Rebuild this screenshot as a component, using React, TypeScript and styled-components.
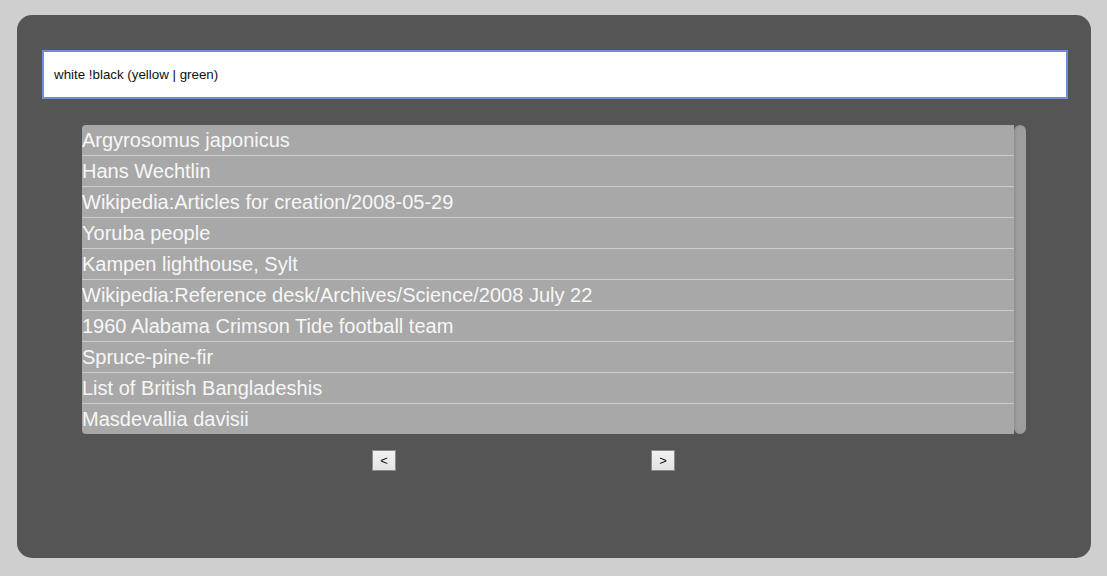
import React, { useState } from "react";
import styled, { createGlobalStyle } from "styled-components";

const GlobalStyle = createGlobalStyle`
  html, body {
    margin: 0;
    padding: 0;
    background: #cfcfcf;
    font-family: "Liberation Sans", Arial, sans-serif;
  }
`;

const Page = styled.div`
  padding: 15px 16px 18px 17px;
  box-sizing: border-box;
  width: 1107px;
  height: 576px;
`;

const Panel = styled.div`
  background: #555555;
  border-radius: 15px;
  height: 543px;
  box-sizing: border-box;
  padding: 35px 23px 0 25px;
  display: flex;
  flex-direction: column;
`;

const SearchInput = styled.input`
  box-sizing: border-box;
  width: 1026px;
  height: 49px;
  border: 2px solid #6b8fd4;
  background: #ffffff;
  padding: 0 10px;
  font-family: "Liberation Sans", Arial, sans-serif;
  font-size: 13.33px;
  color: #111;
  outline: none;
`;

const ListWrap = styled.div`
  margin: 26px 0 0 40px;
  width: 944px;
  height: 309px;
  border-radius: 4px;
  display: flex;
  overflow: hidden;
`;

const Rows = styled.ul`
  list-style: none;
  margin: 0;
  padding: 0;
  flex: 1;
  background: #a8a8a8;
`;

const Row = styled.li<{ $last?: boolean }>`
  height: 31px;
  box-sizing: border-box;
  border-bottom: ${(p) => (p.$last ? "none" : "1px solid #cdcdcd")};
  color: #f7f7f7;
  font-size: 20px;
  line-height: 31px;
  white-space: nowrap;
  cursor: pointer;
`;

const Scrollbar = styled.div`
  width: 12px;
  display: flex;
`;

const Thumb = styled.div`
  flex: 1;
  background: #9e9e9e;
  border-radius: 6px;
  box-shadow: inset 2px 0 2px rgba(0, 0, 0, 0.07);
`;

const Pager = styled.div`
  display: flex;
  gap: 255px;
  margin: 16px 0 0 330px;
`;

const PageButton = styled.button`
  width: 24px;
  height: 21px;
  padding: 0;
  box-sizing: border-box;
  border: 1px solid #8a8a8a;
  background: linear-gradient(#f2f2f2, #e2e2e2);
  font-family: "Liberation Sans", Arial, sans-serif;
  font-size: 13px;
  color: #111;
`;

const titles = [
  "Argyrosomus japonicus",
  "Hans Wechtlin",
  "Wikipedia:Articles for creation/2008-05-29",
  "Yoruba people",
  "Kampen lighthouse, Sylt",
  "Wikipedia:Reference desk/Archives/Science/2008 July 22",
  "1960 Alabama Crimson Tide football team",
  "Spruce-pine-fir",
  "List of British Bangladeshis",
  "Masdevallia davisii",
];

export default function App() {
  const [query, setQuery] = useState("white !black (yellow | green)");

  return (
    <>
      <GlobalStyle />
      <Page>
        <Panel>
          <SearchInput value={query} onChange={(e) => setQuery(e.target.value)} />
          <ListWrap>
            <Rows>
              {titles.map((t, i) => (
                <Row key={t} $last={i === titles.length - 1}>
                  {t}
                </Row>
              ))}
            </Rows>
            <Scrollbar>
              <Thumb />
            </Scrollbar>
          </ListWrap>
          <Pager>
            <PageButton>&lt;</PageButton>
            <PageButton>&gt;</PageButton>
          </Pager>
        </Panel>
      </Page>
    </>
  );
}
